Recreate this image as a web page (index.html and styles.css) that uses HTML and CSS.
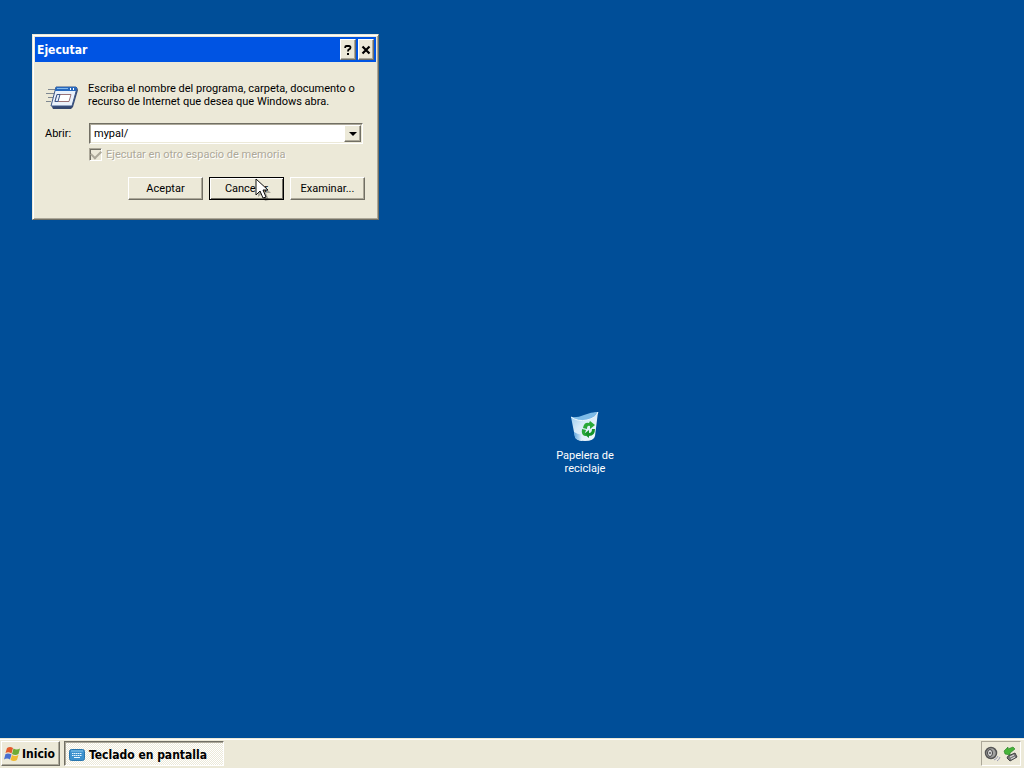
FILE: index.html
```html
<!DOCTYPE html>
<html lang="es">
<head>
<meta charset="utf-8">
<meta name="viewport" content="width=device-width, initial-scale=1">
<title>Escritorio</title>
<link rel="stylesheet" href="styles.css">
</head>
<body>
<main class="desktop">
  <section class="window" role="dialog" aria-labelledby="run-title">
    <header class="titlebar">
      <h1 class="titlebar-text" id="run-title">Ejecutar</h1>
      <button class="caption-button" type="button" aria-label="Ayuda">
        <svg width="8" height="10" viewBox="0 0 8 10" aria-hidden="true"><path d="M1.2 3V2.2Q1.2 1 2.5 1H5Q6.5 1 6.5 2.4T5 4.4Q4 4.900 4 6.500" fill="none" stroke="#000" stroke-width="1.8"/><path d="M3 8h2v2H3z"/></svg>
      </button>
      <button class="caption-button" type="button" aria-label="Cerrar">
        <svg width="10" height="10" viewBox="0 0 10 10" aria-hidden="true"><path d="M1.5 1.5l7 7M8.5 1.5l-7 7" stroke="#000" stroke-width="2.2"/></svg>
      </button>
    </header>
    <form class="run-form">
      <div class="intro">
        <svg class="run-icon" width="34" height="26" viewBox="0 0 34 26" aria-hidden="true">
          <path d="M3 4.5h7M1 8.5h8M3 12.5h5M1 16.5h5" stroke="#7e8790" stroke-width="1"/>
          <path d="M12 3h20l1 2-5 17-2 2H8l-1-2z" fill="#34476f"/>
          <path d="M11 2h20l1 1-5 18H6z" fill="#e9f1fb" stroke="#3b5688" stroke-width="1"/>
          <path d="M11 2h20l1 1-1 3H10z" fill="#2869bd"/>
          <path d="M12 3.5h11" stroke="#83b9ee"/><path d="M25 4h1M28 4h1" stroke="#fff" stroke-width="2"/>
          <path d="M12 9.500h14l-2 7H10z" fill="#fff" stroke="#9a7377"/>
          <path d="M12 9.500h3l-2 7h-3z" fill="#e9f1fb" stroke="#3b5688"/>
        </svg>
        <p class="intro-text">Escriba el nombre del programa, carpeta, documento o<br>recurso de Internet que desea que Windows abra.</p>
      </div>
      <div class="field">
        <label class="field-label" for="open">Abrir:</label>
        <div class="combo">
          <input class="combo-input" id="open" type="text" value="mypal/" autocomplete="off" spellcheck="false">
          <button class="combo-button" type="button" aria-label="Mostrar lista">
            <svg width="8" height="4" viewBox="0 0 8 4" aria-hidden="true"><path d="M0 0h8L4 4z"/></svg>
          </button>
        </div>
      </div>
      <label class="check"><input class="check-box" type="checkbox" checked disabled>Ejecutar en otro espacio de memoria</label>
      <div class="actions">
        <button class="button" type="button">Aceptar</button>
        <button class="button button-default" type="button">Cancelar</button>
        <button class="button" type="button">Examinar...</button>
      </div>
    </form>
  </section>

  <a class="shortcut" href="#papelera">
    <svg width="30" height="32" viewBox="0 0 30 32" aria-hidden="true">
      <defs>
        <linearGradient id="bin" x1="0" y1="0" x2="1" y2="1"><stop offset="0" stop-color="#8cc4ec"/><stop offset=".4" stop-color="#d6eaf8"/><stop offset="1" stop-color="#f2f8fc"/></linearGradient>
        <linearGradient id="foot" x1="0" y1="0" x2="1" y2="0"><stop offset="0" stop-color="#5fa6de"/><stop offset="1" stop-color="#e3f1fa"/></linearGradient>
      </defs>
      <path d="M1 6Q7 8 14 5T28 1L25 25Q24 30 15 30Q6 30 5 26z" fill="url(#bin)"/>
      <path d="M1 6Q7 7 14 4T28 1Q26 7 17 9Q8 11 1 6z" fill="#7dbbe8"/>
      <path d="M1 6Q8 11 17 9Q26 7 28 1" fill="none" stroke="#eef7fd"/>
      <path d="M4 21q5 3 8 2v7q-6-1-7-4z" fill="url(#foot)"/>
      <path d="M13 17q1-6 6-5l1-2 5 4-5 4v-3q-3-1-3 3z" fill="#2aa838"/>
      <path d="M25 18q0 7-6 7v2l-5-4 5-4v3q3 0 3-4z" fill="#159329"/>
      <path d="M12 18l4 1-1 3q0 2 2 3h-2q-4-1-3-7z" fill="#2aa838"/>
    </svg>
    <span class="shortcut-name">Papelera de reciclaje</span>
  </a>

  <svg class="pointer" width="16" height="24" viewBox="0 0 16 24" aria-hidden="true">
    <path d="M3 3v16l4-3 3 7 4-1-3-7h5z" fill="#000" opacity=".28"/>
    <path d="M1 1v16l4-4 3 7 3-1-3-7h5z" fill="#fff" stroke="#111" stroke-width="1"/>
  </svg>
</main>

<footer class="taskbar">
  <button class="start" type="button">
    <svg width="17" height="16" viewBox="0 0 17 16" aria-hidden="true">
      <path d="M3 2q3-2 6 0L7.5 7.500q-3-2-6-.5z" fill="#e35b2d"/>
      <path d="M9.500 2.500q3 2 6.500 0L14.500 8q-3 2-6.500 0z" fill="#6fab36"/>
      <path d="M1.500 8q3-1 6 .5L6 13.500q-3-2-6 0z" fill="#4a6fd0"/>
      <path d="M8 9q3 2 6.500 0L13 14q-3 2-6.500 0z" fill="#f0ba31"/>
    </svg>
    <span>Inicio</span>
  </button>
  <button class="task" type="button" aria-pressed="true">
    <svg width="16" height="14" viewBox="0 0 16 14" aria-hidden="true">
      <rect x=".5" y="1.5" width="15" height="11" rx="2" fill="#3d91ce" stroke="#2876ae"/>
      <path d="M2 3h12" stroke="#8bc9ed"/>
      <path d="M3 5.5h10M3 7.5h10" stroke="#e8f7ff" stroke-dasharray="1.5 .5"/><path d="M5 9.5h6" stroke="#e8f7ff"/>
    </svg>
    <span>Teclado en pantalla</span>
  </button>
  <div class="tray">
    <svg width="17" height="16" viewBox="0 0 17 16" role="img" aria-label="Volumen">
      <circle cx="7" cy="7" r="5.5" fill="#a4a4a2" stroke="#555" stroke-width="1.5"/>
      <ellipse cx="6" cy="7" rx="2.5" ry="3.5" fill="#dadada" stroke="#444"/>
      <circle cx="6" cy="7" r="1" fill="#555"/>
      <path d="M10 14q3-1 4-4M13 15q2-1 3-4" fill="none" stroke="#9b9bb5"/>
    </svg>
    <svg width="15" height="16" viewBox="0 0 15 16" role="img" aria-label="Quitar hardware con seguridad">
      <path d="M5 10l7-3 2 4-7 4-3-3z" fill="#777" stroke="#444"/>
      <path d="M7 11l4-2M8 13l4-2" stroke="#e6e6e6"/>
      <path d="M1 5l4-4v2l5-2 2 2-5 4v2l-5-1z" fill="#45b438" stroke="#247b22" stroke-width=".6"/>
    </svg>
  </div>
</footer>
</body>
</html>
```

FILE: styles.css
```css
:root {
  --face: #ece9d8;
  --shade: #aca899;
  --dark: #716f64;
  --light: #ffffff;
  --ui: Roboto, "Noto Sans", sans-serif;
  --ui-bold: "DejaVu Sans Condensed", "Noto Sans", sans-serif;
}

* {
  box-sizing: border-box;
}

body {
  display: flex;
  flex-direction: column;
  min-height: 100vh;
  margin: 0;
  background: #004e98;
  color: #000;
  font: 11px/13px var(--ui);
}

button,
input {
  color: inherit;
  font: inherit;
}

button {
  padding: 0;
}

h1,
p {
  margin: 0;
}

.desktop {
  position: relative;
  flex: 1;
}

.window {
  position: absolute;
  top: 34px;
  left: 32px;
  width: 347px;
  padding: 2px;
  background: var(--face);
  border: 1px solid;
  border-color: var(--face) var(--dark) var(--dark) var(--face);
  box-shadow: inset 1px 1px var(--light), inset -1px -1px var(--shade);
}

.titlebar {
  display: flex;
  align-items: center;
  gap: 2px;
  height: 25px;
  padding: 0 2px;
  background: #0054e3;
  color: #fff;
}

.titlebar-text {
  flex: 1;
  font: bold 12px/16px var(--ui-bold);
}

.caption-button,
.combo-button,
.button,
.start {
  background: var(--face);
  border: 1px solid;
  border-color: var(--light) var(--dark) var(--dark) var(--light);
  box-shadow: inset -1px -1px var(--shade);
}

.caption-button {
  display: flex;
  align-items: center;
  justify-content: center;
  width: 16px;
  height: 21px;
}

.run-form {
  display: flex;
  flex-direction: column;
  padding: 20px 11px 17px 10px;
}

.intro {
  display: flex;
  gap: 9px;
}

.run-icon {
  flex: none;
  margin-top: 3px;
}

.intro-text {
  white-space: nowrap;
}

.field {
  display: flex;
  align-items: center;
  margin-top: 12px;
  padding-right: 2px;
}

.field-label {
  width: 44px;
}

.combo {
  display: flex;
  flex: 1;
  height: 21px;
  padding: 1px;
  background: #fff;
  border: 1px solid;
  border-color: var(--dark) var(--light) var(--light) var(--dark);
  box-shadow: inset 1px 1px var(--shade), inset -1px -1px var(--face);
}

.combo-input {
  flex: 1;
  min-width: 0;
  padding: 0 3px;
  background: transparent;
  border: 0;
  outline: 0;
}

.combo-button {
  display: flex;
  align-items: center;
  justify-content: center;
  width: 17px;
}

.check {
  display: flex;
  align-items: center;
  gap: 4px;
  margin: 4px 0 0 44px;
  color: var(--shade);
  text-shadow: 1px 1px var(--light);
}

.check-box {
  appearance: none;
  width: 13px;
  height: 13px;
  margin: 0;
  padding: 1px;
  background: var(--face);
  border: 1px solid;
  border-color: var(--shade) var(--light) var(--light) var(--shade);
  box-shadow: inset 1px 1px var(--dark);
}

.check-box::before {
  content: "";
  display: block;
  width: 8px;
  height: 5px;
  border: solid var(--shade);
  border-width: 0 0 2px 2px;
  transform: rotate(-45deg);
}

.actions {
  display: flex;
  justify-content: flex-end;
  gap: 6px;
  margin-top: 16px;
}

.button {
  width: 75px;
  height: 23px;
}

.button-default {
  border-color: #000;
  box-shadow: inset 1px 1px var(--light), inset -1px -1px var(--dark);
}

.shortcut {
  position: absolute;
  top: 411px;
  left: 549px;
  display: flex;
  flex-direction: column;
  align-items: center;
  gap: 6px;
  width: 72px;
  color: #fff;
  text-align: center;
  text-decoration: none;
}

.pointer {
  position: absolute;
  top: 178px;
  left: 255px;
}

.taskbar {
  display: flex;
  align-items: flex-end;
  gap: 4px;
  height: 30px;
  padding: 0 3px 2px 1px;
  background: var(--face);
  border-top: 1px solid var(--face);
  box-shadow: inset 0 1px var(--light);
  font: bold 12px/16px var(--ui-bold);
}

.start,
.task {
  display: flex;
  align-items: center;
  height: 25px;
  white-space: nowrap;
}

.start {
  gap: 1px;
  min-width: 59px;
  padding: 0 2px;
}

.task {
  gap: 4px;
  width: 160px;
  padding: 3px 4px 0;
  background: repeating-conic-gradient(#fff 0 25%, var(--face) 0 50%) 0 0 / 2px 2px;
  border: 1px solid;
  border-color: var(--dark) var(--light) var(--light) var(--dark);
  box-shadow: inset 1px 1px var(--shade);
}

.tray {
  display: flex;
  align-items: center;
  gap: 2px;
  height: 25px;
  margin-left: auto;
  padding: 0 2px;
  border: 1px solid;
  border-color: var(--shade) var(--light) var(--light) var(--shade);
}
```
